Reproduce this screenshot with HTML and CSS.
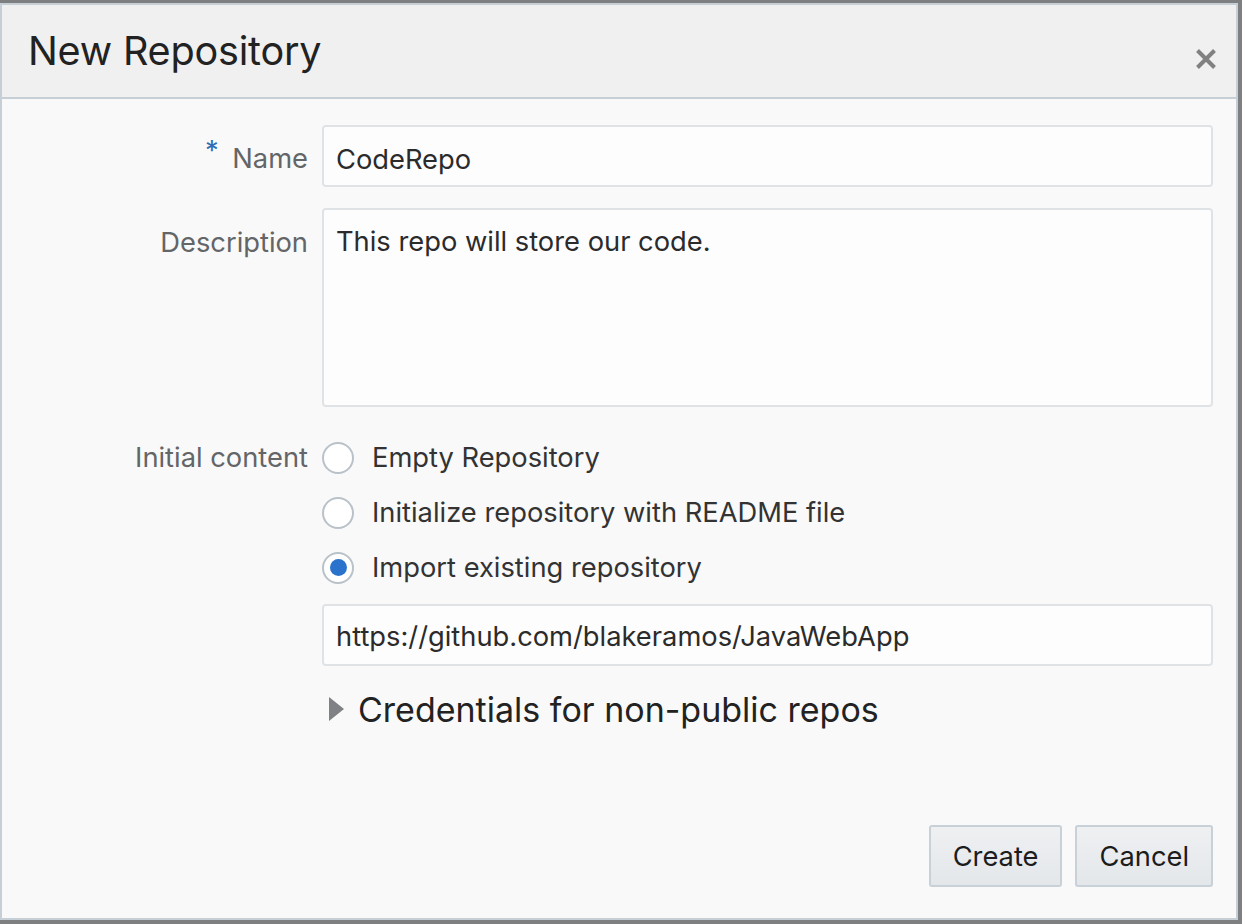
FILE: index.html
```html
<!DOCTYPE html>
<html>
<head>
<meta charset="utf-8">
<link rel="stylesheet" href="styles.css">
</head>
<body>
<div class="dialog">
  <div class="header">
    <h1 class="title">New Repository</h1>
    <span class="close" aria-label="Close">
      <svg width="20" height="20" viewBox="0 0 20 20"><path d="M1.5 1.5 L18.5 18.5 M18.5 1.5 L1.5 18.5" stroke="#808183" stroke-width="4" stroke-linecap="butt"/></svg>
    </span>
  </div>
  <div class="body">
    <div class="form">
      <label class="label label-name"><span class="req">*</span> Name</label>
      <div class="input name-input">CodeRepo</div>

      <label class="label label-desc">Description</label>
      <div class="textarea">This repo will store our code.</div>

      <label class="label label-init">Initial content</label>
      <div class="options">
        <div class="radio-row"><span class="radio"></span><span class="radio-text">Empty Repository</span></div>
        <div class="radio-row"><span class="radio"></span><span class="radio-text">Initialize repository with README file</span></div>
        <div class="radio-row"><span class="radio checked"></span><span class="radio-text">Import existing repository</span></div>
        <div class="input url">https://github.com/blakeramos/JavaWebApp</div>
        <div class="cred"><span class="tri"></span><span class="cred-text">Credentials for non-public repos</span></div>
      </div>
    </div>
    <div class="footer">
      <button class="btn">Create</button>
      <button class="btn">Cancel</button>
    </div>
  </div>
</div>
</body>
</html>
```

FILE: styles.css
```css
html, body {
  margin: 0;
  padding: 0;
}
body {
  background: #7e7f81;
  width: 1242px;
  height: 924px;
  overflow: hidden;
  font-family: Inter, "Noto Sans", "Liberation Sans", sans-serif;
}
.dialog {
  box-sizing: border-box;
  margin-top: 3px;
  width: 1238px;
  height: 917px;
  border: 2px solid #c6ced6;
  background: #f9f9f9;
  display: flex;
  flex-direction: column;
}
.header {
  height: 92px;
  flex: none;
  background: #f0f0f0;
  border-bottom: 2px solid #c6ced6;
  display: flex;
  align-items: center;
  justify-content: space-between;
  padding: 0 20px 0 26px;
}
.title {
  margin: 0;
  font-weight: 400;
  font-size: 39.6px;
  color: #222;
  letter-spacing: -0.2px;
}
.close {
  display: flex;
  margin-top: 16px;
}
.body {
  flex: 1;
  display: flex;
  flex-direction: column;
  padding: 26px 23px 31px 0;
}
.form {
  display: grid;
  grid-template-columns: 306px 1fr;
  column-gap: 14px;
  row-gap: 21px;
  align-items: start;
}
.label {
  text-align: right;
  font-size: 27.3px;
  color: #636567;
}
.label-name { line-height: 62px; height: 62px; padding-top: 3px; box-sizing: border-box; }
.label-desc { line-height: 70px; }
.label-init { margin-top: 4px; line-height: 52px; }
.req {
  color: #2f6cb4;
  position: relative;
  top: -8px;
  margin-right: 6px;
}
.input, .textarea {
  box-sizing: border-box;
  background: #fdfdfe;
  border: 2px solid #e0e3e6;
  border-radius: 4px;
  font-size: 27.3px;
  color: #2b2b2b;
  padding: 0 12px;
}
.input {
  height: 62px;
  line-height: 60px;
  padding-top: 1px;
}
.name-input {
  padding-top: 3px;
}
.textarea {
  height: 199px;
  line-height: 64px;
}
.options {
  display: flex;
  flex-direction: column;
  margin-top: 2px;
}
.radio-row {
  display: flex;
  align-items: center;
  height: 55px;
}
.radio {
  box-sizing: border-box;
  width: 32px;
  height: 32px;
  border-radius: 50%;
  border: 2px solid #b9c1c9;
  background: #fff;
  display: flex;
  align-items: center;
  justify-content: center;
  margin-right: 18px;
}
.radio.checked::after {
  content: "";
  width: 17px;
  height: 17px;
  border-radius: 50%;
  background: #2a72cb;
}
.radio-text {
  font-size: 27.3px;
  color: #333;
}
.url {
  margin-top: 9px;
}
.cred {
  display: flex;
  align-items: center;
  height: 50px;
  margin-top: 18px;
}
.tri {
  width: 0;
  height: 0;
  border-top: 12px solid transparent;
  border-bottom: 12px solid transparent;
  border-left: 15px solid #808184;
  margin-left: 7px;
  margin-right: 14px;
}
.cred-text {
  font-size: 34px;
  color: #222;
}
.footer {
  margin-top: auto;
  display: flex;
  justify-content: flex-end;
  gap: 13px;
}
.btn {
  font-family: inherit;
  font-size: 27.3px;
  color: #1c1c1c;
  height: 62px;
  padding: 0 22px;
  border: 2px solid #c8d0d8;
  border-radius: 3px;
  background: linear-gradient(#eef0f2, #e4e7ea);
}
```
